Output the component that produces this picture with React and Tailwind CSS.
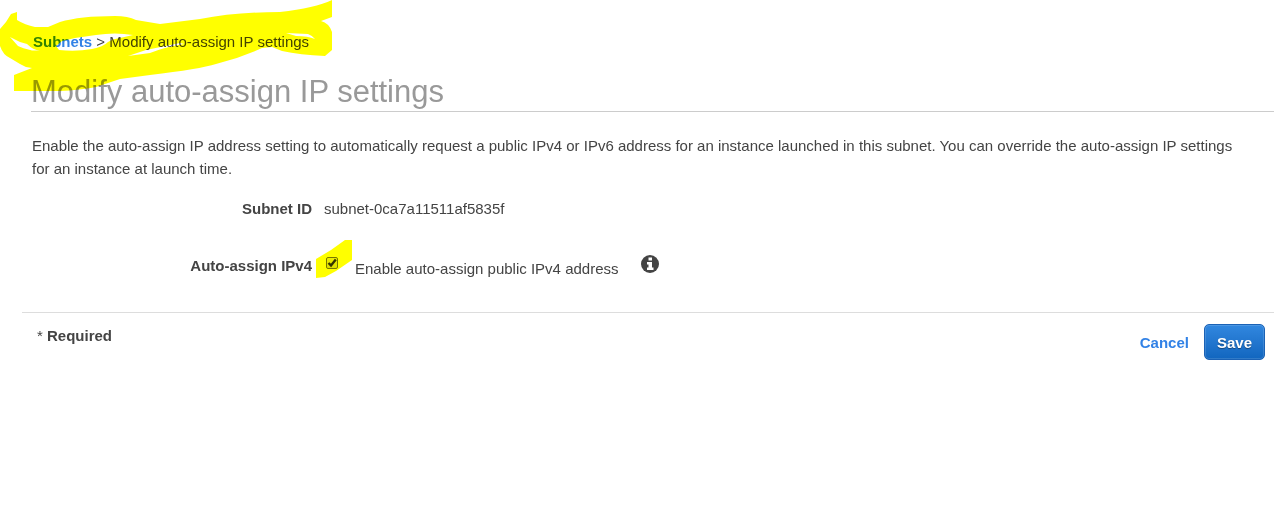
export default function App() {
  return (
    <main className="relative min-h-screen bg-white font-['Liberation_Sans',Arial,sans-serif] text-[15px] leading-[23px] text-[#444]">
      <svg className="pointer-events-none absolute left-0 top-0 z-10 mix-blend-multiply" width="360" height="290" fill="#ff0" fillRule="evenodd" aria-hidden="true">
        <path d="M17 12L11 14L6 22L0 29V46Q3 55 10 58L20 64L26 67L32 68L14 75V91H60Q80 90 96 87L120 79L150 75Q200 69 216 64Q240 58 262 48L272 47L282 51Q300 55 325 56L332 50V32Q329 23 321 21L332 17V0Q315 8 280 12Q235 12 200 19L160 24L136 20Q128 16 115 16Q80 16 60 22L48 27H35Q25 25 17 20ZM10 37L20 42L27 44Q33 50 40 50.500H32Q22 48 18 46ZM56 46L62 41L75 38L96 35Q115 32 133 35L120 38Q112 39 108 42Q103 47 92 49Q76 52 59 50ZM128 56L146 50L180 43L184 44Q165 47 150 53ZM286 33L308 34Q313 36 315 39Q308 36 296 36Z" />
        <path d="M316 259L331 250L345 240H352V260L336 271L325 277L316 278Z" />
      </svg>
      <div className="pl-[31px] pr-2 pt-[30px]">
        <nav aria-label="Breadcrumb" className="px-0.5">
          <a href="#subnets" className="font-bold text-[#3282e6]">Subnets</a>{' '}
          <span>&gt;</span>{' '}
          <span>Modify auto-assign IP settings</span>
        </nav>
        <h1 className="mt-5 border-b border-[#ccc] text-[31px] leading-[38px] text-[#999]">Modify auto-assign IP settings</h1>
        <p className="mt-[22px] pl-px pr-6">
          Enable the auto-assign IP address setting to automatically request a public IPv4 or IPv6 address for an instance launched in this subnet. You can override the auto-assign IP settings for an instance at launch time.
        </p>
      </div>
      <form>
        <dl className="mt-[17px] flex gap-3">
          <dt className="w-[312px] text-right font-bold">Subnet ID</dt>
          <dd>subnet-0ca7a11511af5835f</dd>
        </dl>
        <div className="mt-[34px] flex items-start">
          <span id="auto" className="w-[312px] text-right font-bold">Auto-assign IPv4</span>
          <span className="relative ml-3.5 mt-[3px] flex size-3">
            <input id="ipv4" type="checkbox" defaultChecked aria-describedby="auto" className="peer size-3 appearance-none rounded-[2px] border border-[#777] bg-linear-to-b from-[#eee] to-[#ddd]" />
            <svg className="pointer-events-none absolute inset-0 hidden peer-checked:block" viewBox="0 0 12 12" fill="none" stroke="#333" strokeWidth="2.4" aria-hidden="true"><path d="M2.500 6L5 8.500L9.800 2.600" /></svg>
          </span>
          <label htmlFor="ipv4" className="ml-[17px] mt-[3px]">Enable auto-assign public IPv4 address</label>
          <button type="button" aria-label="More information" className="ml-[22px] mt-px">
            <svg className="size-[18px]" viewBox="0 0 18 18" aria-hidden="true"><circle cx="9" cy="9" r="9" fill="#444" /><path d="M7.500 2.500h3.500v3h-3.500zM6 7h5v5.500h1.500V15H6v-2.500h1.500v-3H6z" fill="#fff" /></svg>
          </button>
        </div>
        <footer className="ml-[22px] mr-2 mt-8 flex justify-between border-t border-[#ddd] pl-[15px] pr-[9px] pt-[11px]">
          <p>* <b>Required</b></p>
          <div className="flex items-center gap-[15px]">
            <button type="button" className="font-bold text-[#3282e6]">Cancel</button>
            <button type="submit" className="h-9 rounded-[5px] border border-[#1b62b5] bg-linear-to-b from-[#3187df] to-[#1166bf] px-3 font-bold text-white shadow-[inset_0_0_0_1px_#ffffff22] text-shadow-[0_1px_1px_#00000066]">Save</button>
          </div>
        </footer>
      </form>
    </main>
  )
}
